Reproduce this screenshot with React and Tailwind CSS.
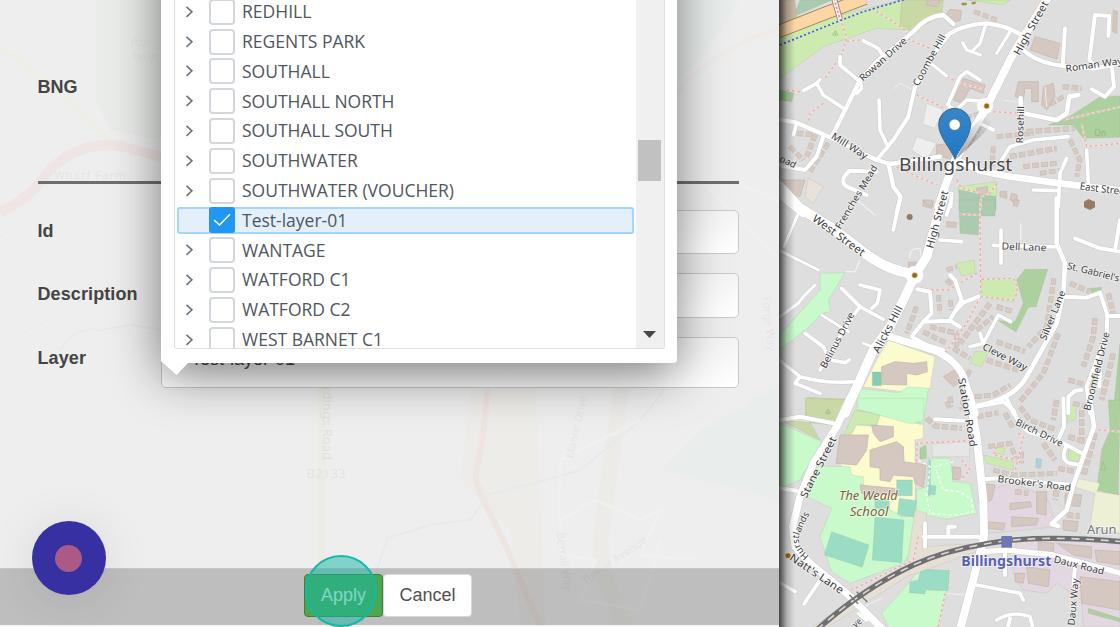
import React from "react";

const ROWS = [
  "REDHILL",
  "REGENTS PARK",
  "SOUTHALL",
  "SOUTHALL NORTH",
  "SOUTHALL SOUTH",
  "SOUTHWATER",
  "SOUTHWATER (VOUCHER)",
  "Test-layer-01",
  "WANTAGE",
  "WATFORD C1",
  "WATFORD C2",
  "WEST BARNET C1",
];

// The map is drawn as three vertical sections, each 600 units tall.
// Areas: [fill, path]
const AREAS = [
  [
    ["#cdebb0", "M-5,105 L160,50 L380,-5 L480,-5 L400,90 L290,85 L130,140 L0,235Z"],
    ["#c8d9a6", "M365,0 L490,0 L485,45 L400,95 L360,75Z"],
    ["#aacbaf", "M60,0 L155,0 L40,50Z"],
    ["#cbb9a4", "M0,0 L45,0 L50,50 L0,75Z"],
    ["#cdebb0", "M560,0 L690,0 L670,15 L600,5Z"],
    ["#a9d1a0", "M0,270 L42,280 L35,305 L0,300Z"],
    ["#add19e", "M1020,288 L960,290 L868,350 L805,375 L880,375 L910,415 L1020,412Z"],
    ["#cdebb0", "M535,560 L650,545 L650,590 L535,580Z"],
    ["#aacbaf", "M537,570 L648,590 L648,630 L537,630Z"],
    ["#eeeeee", "M440,310 L490,330 L465,385 L428,372Z M410,410 L470,430 L440,480 L395,450Z"],
    ["#e8e2da", "M85,535 L130,560 L100,610 L75,590Z"],
  ],
  [
    ["#aacbaf", "M537,0 L648,0 L645,48 L597,48 L595,105 L540,100Z"],
    ["#c8facc", "M120,220 L195,218 L145,300 L152,335 L125,340 L100,370 L0,450 L0,405 L120,270Z"],
    ["#cdebb0", "M530,190 L583,180 L585,220 L545,228Z"],
    ["#add19e", "M735,208 L803,208 L768,320 L745,322 L708,396 L655,362 L705,365 L730,310 L710,240Z"],
    ["#cdebb0", "M605,235 L700,235 Q722,270 700,305 L605,292Z"],
    ["#fbfbcd", "M325,420 L465,470 L450,565 L370,575 L250,560 L290,480Z"],
    ["#88cbb5", "M277,516 L304,516 L304,557 L277,557Z"],
    ["#c8facc", "M235,565 L355,578 L385,560 L445,565 L430,670 L350,655 L230,630Z"],
    ["#c8d9a6", "M82,592 L195,597 L170,650 L75,650Z"],
    ["#cdebb0", "M585,455 L625,455 L605,500 L570,490Z"],
    ["#add19e", "M1020,430 L1020,630 L1000,630Z M930,265 L965,262 L960,280 L935,278Z M400,420 L425,430 L405,435Z"],
    ["#cdebb0", "M935,525 L960,530 L950,565 L932,560Z"],
  ],
  [
    ["#c8d9a6", "M75,-5 L195,0 L160,75 L0,60 L120,120 L80,50Z"],
    ["#c8facc", "M0,70 L125,125 L60,240 L0,265Z"],
    ["#cdebb0", "M225,30 L300,45 L300,75 L235,75 L180,130Z"],
    ["#fbfbcd", "M300,45 L430,75 L430,115 L405,120 L405,345 L320,345 L270,270 L190,205 L170,180 L230,75 L290,80Z"],
    ["#c8facc", "M230,-5 L432,-5 L430,60 L395,72 L235,28Z"],
    ["#c8facc", "M110,198 L210,200 L215,225 L250,230 L250,280 L365,350 L405,350 L405,440 L370,490 L210,550 L155,515 L120,410 L155,325 L80,290Z"],
    ["#9bdcc5", "M350,240 L397,240 L397,287 L350,287Z M358,295 L411,302 L400,350 L352,342Z M285,352 L372,360 L365,488 L277,480Z M155,395 L267,435 L247,502 L133,465Z M285,300 L328,300 L328,325 L285,325Z"],
    ["#c8facc", "M445,175 L510,175 L520,245 L570,250 L590,340 L500,358 L410,340 L410,270 L440,260Z"],
    ["#9bdcc5", "M448,255 L468,258 L465,285 L447,282Z"],
    ["#e6e6e6", "M455,132 L568,125 L568,170 L458,170Z"],
    ["#add19e", "M420,145 L438,135 L440,175 L420,178Z"],
    ["#e3d8e1", "M615,270 L700,250 L800,290 L830,380 L730,390 L625,400Z M710,420 L1020,425 L1020,681 L910,681 L905,600 L830,550 L800,580 L730,570 L700,520Z"],
    ["#c8facc", "M385,550 L420,508 L508,512 L498,590 L470,690 L330,690 L305,640Z"],
    ["#9bdcc5", "M422,508 L508,512 L504,572 L438,570 L434,582 L388,578 L390,545 L415,540Z"],
    ["#add19e", "M985,0 L1020,0 L1015,285 L950,270 L965,150 L990,90Z M925,625 L1020,655 L1020,665 L925,640Z"],
    ["#eef0d5", "M890,235 L960,250 L950,275 L1020,285 L1020,400 L930,380 L945,280 L880,260Z"],
    ["#cdebb0", "M610,165 L700,185 L700,210 L620,190Z M865,150 L905,150 L895,185 L865,180Z M650,140 L675,145 L670,165 L645,160Z M865,15 L890,15 L885,60 L862,65Z"],
    ["#aad3df", "M768,175 L785,178 L782,205 L768,203Z M447,180 L452,180 L450,290 L443,285Z"],
    ["#e6dfd6", "M405,330 L440,340 L430,440 L600,430 L600,450 L380,530 L130,690 L100,681 L240,580 L380,500Z"],
  ],
];

const BUILDINGS = [
  "M510,28 L545,32 L540,62 L515,65 L500,40Z M765,110 L840,130 L830,178 L750,150Z M550,235 L615,255 L610,280 L570,265 L545,310 L520,300Z M715,245 L775,245 L775,305 L755,305 L755,265 L735,265 L730,300 L705,290Z M470,435 L520,430 L560,450 L520,480 L470,465Z M590,565 L622,560 L622,585 L590,585Z M440,0 L480,0 L470,20 L440,15Z M430,600 L460,603 L455,625 L428,618Z M1000,30 L1012,35 L1010,100 L998,95Z M790,260 L820,250 L825,290 L800,330 L785,315Z M0,540 L75,540 L60,590 L5,570Z M660,575 L680,575 L680,595 L660,590Z M695,580 L712,585 L710,610 L690,600Z",
  "M305,500 L345,485 L400,490 L440,485 L442,515 L410,525 L380,520 L380,555 L305,553 L305,525Z M385,187 L412,187 L408,205 L385,205Z M430,0 L455,0 L460,20 L440,15Z M500,65 L530,68 L528,82 L500,80Z M700,0 L718,0 L712,20 L700,16Z M490,530 L540,500 L560,530 L520,560Z",
  "M275,75 L340,80 L340,110 L300,125 L280,100Z M180,105 L265,105 L260,150 L230,195 L168,190Z M270,150 L350,125 L370,140 L372,185 L438,195 L430,262 L405,250 L400,230 L340,225 L330,245 L300,240 L300,205 L270,200Z M240,255 L345,265 L345,285 L245,280Z M518,200 L542,203 L542,240 L518,238Z M770,275 L800,275 L798,345 L770,340Z M695,350 L775,355 L770,375 L695,380Z M690,310 L750,305 L755,320 L690,330Z M775,425 L822,430 L820,458 L775,455Z M740,500 L810,510 L805,560 L745,550Z M900,530 L1020,545 L1020,630 L905,610Z M625,365 L675,370 L670,390 L625,385Z M600,250 L645,255 L635,300 L610,310Z M855,280 L905,285 L900,320 L855,315Z M705,520 L735,520 L730,550 L705,545Z M830,430 L935,440 L935,475 L880,465Z M945,450 L1020,455 L1020,495 L950,485Z M850,360 L895,365 L890,395 L850,390Z",
];

// Terraces: rows of small houses, [width, path]
const TERRACES = [
  [
    [12, "M582,35 L650,60"], [14, "M848,260 L905,265"], [12, "M650,410 L760,400"], [14, "M740,395 L885,385"],
    [14, "M690,470 L830,445"], [13, "M730,500 L830,490"], [12, "M640,440 L635,500"], [14, "M50,400 L105,405 L80,470"],
    [12, "M145,430 L90,515"], [12, "M30,440 L70,480"], [12, "M870,420 L900,480 L890,530"], [11, "M850,290 L800,320"],
    [12, "M780,520 L850,510"], [11, "M600,380 L560,440"], [10, "M530,360 L600,340"], [11, "M575,400 L600,385"],
  ],
  [
    [13, "M822,235 L800,380 L745,440"], [14, "M870,250 L930,275 M985,280 L1000,340"], [13, "M450,380 L530,400 L530,440"],
    [13, "M410,320 L380,400"], [13, "M430,395 L500,430"], [14, "M630,310 L540,430"], [14, "M650,320 L700,335"],
    [13, "M650,425 L735,455"], [14, "M620,480 L715,510"], [13, "M835,400 L790,520 L720,605"], [14, "M945,355 L940,410 L910,500"],
    [14, "M1000,460 L965,600"], [12, "M585,590 L640,585 L690,555"], [12, "M500,210 L530,200 M500,240 L520,260 M475,285 L480,340 M510,300 L515,330"],
    [13, "M865,540 L940,560"], [12, "M880,610 L920,620"], [12, "M570,510 L560,530 M510,590 L515,620"], [13, "M520,445 L570,475"], [12, "M590,390 L640,350"],
  ],
  [
    [14, "M440,55 L465,78 L545,85"], [13, "M590,50 L655,38 M675,40 L700,85"], [13, "M720,20 L750,60 L830,90"],
    [14, "M830,0 L820,60 M790,130 L825,180"], [14, "M905,30 L905,130"], [15, "M945,100 L910,230"], [12, "M625,140 L690,130 L710,180"],
    [12, "M640,210 L700,225 L830,220"], [12, "M725,155 L725,190"], [14, "M835,205 L890,215"], [14, "M865,110 L915,125"],
    [12, "M500,5 L510,30 M550,-5 L545,30"], [14, "M705,275 L745,280"], [16, "M830,270 L825,300"], [16, "M860,345 L900,348"],
  ],
];

const PATHS = [
  "M180,55 L200,115 L185,165 L135,235 M200,125 L250,118 M275,25 L370,85 L390,120 L450,145 M60,275 L20,270 M130,310 L90,340 L85,365 M410,285 L495,325 M500,230 L540,250 L620,270 M640,335 L720,340 M850,360 L1020,320 M905,370 L920,440 L1020,430 M335,495 L470,555 M530,540 L545,565 L600,580 M650,550 L630,580 L603,590 L603,630",
  "M600,0 L602,290 M540,43 L600,45 M605,238 L700,235 Q722,270 700,300 L605,290 M602,290 L560,370 L495,460 M405,270 L505,270 L590,220",
  "M410,185 L412,130 L570,122 M415,410 L400,480 L215,570 M495,580 L475,681 M955,90 L1020,95 M715,100 L730,110 L705,215 M650,140 L640,165 L710,180 M545,180 L570,210 L540,240",
];

// Roads: [width, path]
const ROADS = [
  [
    [24, "M812,-20 L700,160 L615,330 L525,480 L495,560 L475,620"],
    [20, "M530,480 L600,512 L690,530 L840,550 L1025,572"],
    [24, "M-10,575 L70,640"],
    [13, "M155,410 L215,290 L240,240 L290,185 L400,95 Q440,48 490,45 L520,72"],
    [13, "M500,108 Q540,75 620,70 Q690,78 730,110"],
    [13, "M730,150 Q770,188 850,198 L940,206 L1025,190"],
    [12, "M510,100 L470,150 L405,260 L385,350 L340,420 L290,480"],
    [10, "M617,75 L600,130 L575,155 M548,128 L560,150 L602,165 M690,95 L650,160"],
    [12, "M855,85 L848,195 M985,108 L988,48 L945,45 L928,180 L945,198 M995,195 L1002,260 L975,290 L935,268"],
    [11, "M297,300 L300,390 L320,432 M250,122 L295,145 L310,170 M180,170 L180,195 L240,245 L245,265 L230,280"],
    [11, "M70,272 L110,250 L130,285 L190,325 M110,250 L120,238 M50,370 L40,405"],
    [13, "M-5,358 L50,368 L150,412 L290,480 L330,492 L480,470"],
    [12, "M130,410 L110,470 L75,510 L-5,495"],
    [12, "M290,515 L210,512 Q175,540 200,560 L260,585"],
    [13, "M325,490 L340,560 L362,590 L350,640"],
    [9, "M455,192 L500,228"],
    [11, "M530,335 L503,315 L540,230 L560,215 L600,240 M535,325 L560,300 L620,305 M640,390 L600,370"],
    [14, "M722,295 L722,338 L830,360 L860,340 L868,290 L895,285"],
    [11, "M665,480 L690,440 L760,420 L865,410 M920,450 L925,550 M860,475 L840,520 L835,620 M760,570 L835,572 M515,580 L512,620"],
  ],
  [
    [30, "M-10,-50 L60,25 L150,80 L230,140 Q310,210 400,222"],
    [28, "M495,-20 L470,60 L440,170 L405,225 L375,290 L330,380 L280,450 L240,540 L195,640"],
    [22, "M330,410 L460,450 Q530,480 550,530 L585,640"],
    [14, "M830,-5 L830,130 L855,190 L850,280 L830,370 L740,530 Q700,600 580,620"],
    [9, "M0,152 L115,210 M55,40 L12,140 M105,255 L70,290 L55,310 L0,350 M125,345 L205,395 M250,430 L290,445"],
    [11, "M185,265 L240,320 L310,358 M240,320 L210,360 L120,510 M240,255 L300,270 L292,310 L275,325"],
    [11, "M75,400 L130,440 L150,480 L195,488 L208,480 M0,482 L60,530 Q140,552 220,545 M60,530 L45,550 L120,580"],
    [11, "M360,-5 L340,90 M480,120 L545,125 M515,-5 L500,45"],
    [12, "M412,268 L450,275 L455,340 L430,365 L395,410 M430,365 L510,362 L540,380 M510,225 L525,240 L545,300 L510,360 M530,330 L550,308 L595,290 M395,410 L440,435 L490,450"],
    [11, "M570,440 L610,430 L655,345 L692,365 M610,430 L600,400 M663,90 L663,190 M640,136 L835,141"],
    [12, "M885,115 L960,145 L1025,155 M1020,60 L1005,150 M855,290 L920,293 L960,278 L982,345 L980,400 L950,480 L920,560 L930,640 M980,347 L1025,348 M865,640 L865,590 L885,572 L905,570 M960,515 L958,560 M680,595 L700,640"],
  ],
  [
    [22, "M212,-10 L170,80 L100,190 L60,290 L38,380 L45,440 L90,490 L200,580 L310,690"],
    [24, "M568,-15 L590,110 L610,300 L612,410 L590,500 L540,690"],
    [12, "M0,60 L60,50 L160,70 M465,58 L550,62 M0,265 L50,272"],
    [12, "M580,22 L670,5 L700,30 Q720,90 760,100 L850,130 L905,160 M850,-5 L852,80 L830,130"],
    [14, "M930,0 L942,80 L910,170 L880,255 L860,330 L815,372 L835,378"],
    [12, "M610,238 L650,235 L880,255 M858,140 Q840,180 870,190 L900,195"],
    [12, "M435,370 L435,440 M430,410 L600,410 M505,410 L505,380 L525,380 M120,540 L72,612"],
    [11, "M590,555 L720,580 L730,600 M650,660 Q700,630 750,650 L760,690 M0,548 L45,575 M235,640 L260,660"],
    [16, "M610,455 L680,450 L820,465 L1025,520"],
    [12, "M885,500 L880,560 M675,460 L675,525 M690,655 L680,700"],
  ],
];

// Labels: [text, x, y, angle, size, textLength] with the anchor in the middle
const LABELS = [
  ["Rowan Drive", 309, 178, -42, 29, 180],
  ["Coombe Hill", 448, 180, -61, 29, 172],
  ["High Street", 753, 84, -61, 31, 180],
  ["Roman Way", 942, 194, -8, 29, 172],
  ["Rosehill", 721, 374, -88, 28, 112],
  ["Mill Way", 209, 438, 32, 30, 122],
  ["oad", 24, 485, 25, 28, 52],
  ["East Street", 972, 567, 7, 31, 146],
  ["Frenches Mead", 229, 591, -59, 28, 218],
  ["High Street", 472, 658, -75, 31, 178],
  ["West Street", 176, 706, 36, 33, 186],
  ["Dell Lane", 732, 741, 2, 30, 134],
  ["St. Gabriel's", 940, 816, 14, 29, 160],
  ["Belinus Drive", 172, 1021, -62, 29, 185],
  ["Alicks Hill", 323, 988, -62, 32, 156],
  ["Silver Lane", 818, 946, -68, 29, 158],
  ["Cleve Way", 675, 1071, 27, 29, 146],
  ["Broomfield Drive", 950, 1114, -76, 29, 242],
  ["Station Road", 562, 1237, 80, 30, 210],
  ["Birch Drive", 778, 1298, 26, 29, 154],
  ["Stane Street", 115, 1402, -63, 31, 202],
  ["Brooker's Road", 763, 1450, 7, 29, 222],
  ["Natt's Lane", 110, 1721, 34, 32, 187],
  ["Daux Road", 897, 1696, 14, 29, 155],
  ["Daux Way", 880, 1806, -85, 29, 142],
  ["ve", 231, 1868, -40, 28, 26],
];

function Section({ index, children }) {
  return <g transform={`translate(0 ${index * 600})`}>{children}</g>;
}

function StreetMap() {
  return (
    <svg className="block h-full w-full" viewBox="-3 0 1023 1881" preserveAspectRatio="none">
      <rect x="-3" width="1023" height="1881" fill="#dedede" />
      {AREAS.map((list, i) => (
        <Section key={i} index={i}>
          {list.map(([fill, d], k) => (
            <path key={k} d={d} fill={fill} stroke="#8a9a7a" strokeOpacity="0.25" strokeWidth="2" />
          ))}
        </Section>
      ))}
      {TERRACES.map((list, i) => (
        <Section key={i} index={i}>
          {list.map(([w, d], k) => (
            <g key={k} fill="none">
              <path d={d} stroke="#c6b8af" strokeWidth={w + 2} strokeDasharray="20 7" />
              <path d={d} stroke="#d6cac3" strokeWidth={w - 1} strokeDasharray="18 9" strokeDashoffset="-1" />
            </g>
          ))}
        </Section>
      ))}
      {BUILDINGS.map((d, i) => (
        <Section key={i} index={i}>
          <path d={d} fill="#d5c8c0" stroke="#c3b4aa" strokeWidth="2" />
        </Section>
      ))}
      {PATHS.map((d, i) => (
        <Section key={i} index={i}>
          <path d={d} fill="none" stroke="#f1e6e3" strokeOpacity="0.7" strokeWidth="6" />
          <path d={d} fill="none" stroke="#f2a9a1" strokeWidth="4" strokeDasharray="8 8" />
        </Section>
      ))}
      <g fill="none">
        <path d="M340,268 L360,250 L400,270 M795,260 L800,320 M670,300 L720,308" stroke="#efefef" strokeWidth="3" />
        <path d="M240,780 L225,815 L195,815 M390,775 Q385,745 420,745 L425,780 M722,670 L722,720 M240,850 L280,870 M230,600 L285,645" stroke="#f1f1f1" strokeWidth="4" />
        <path d="M250,1820 L305,1795 M500,1780 L555,1785" stroke="#f1f1f1" strokeWidth="3" />
      </g>
      <path d="M415,1380 L450,1400 L440,1490 L450,1540 L530,1545 L578,1535 L575,1500 L540,1475 L490,1470 L465,1400 L520,1385" fill="none" stroke="#f7fff7" strokeWidth="4" strokeDasharray="10 7" />
      {ROADS.map((list, i) => (
        <Section key={i} index={i}>
          {list.map(([w, d], k) => (
            <path key={k} d={d} fill="none" stroke="#cacaca" strokeWidth={w + 3} strokeLinejoin="round" strokeLinecap="round" />
          ))}
        </Section>
      ))}
      {ROADS.map((list, i) => (
        <Section key={i} index={i}>
          {list.map(([w, d], k) => (
            <path key={k} d={d} fill="none" stroke="#ffffff" strokeWidth={w} strokeLinejoin="round" strokeLinecap="round" />
          ))}
        </Section>
      ))}
      <circle cx="615" cy="318" r="24" fill="#fff" />
      <circle cx="403" cy="825" r="27" fill="#fff" />

      {/* A-road with the footbridge */}
      <path d="M-5,95 L130,42 L255,-5" fill="none" stroke="#9c7c4c" strokeWidth="40" />
      <path d="M-5,95 L130,42 L255,-5" fill="none" stroke="#fcd6a4" strokeWidth="35" />
      <path d="M0,135 L180,62 L250,35 L385,-5" fill="none" stroke="#4a55e0" strokeWidth="5" strokeDasharray="6 7" />
      <path d="M162,-5 L180,58" stroke="#8c7f76" strokeWidth="17" />
      <path d="M162,-5 L180,58" stroke="#f6efeb" strokeWidth="12" />
      <path d="M162,-5 L180,58" stroke="#e09a90" strokeWidth="5" strokeDasharray="7 6" />

      {/* Railway */}
      <path d="M110,1890 Q250,1765 400,1695 Q500,1650 610,1633 Q760,1602 1025,1625" fill="none" stroke="#707070" strokeWidth="16" />
      <path d="M110,1890 Q250,1765 400,1695 Q500,1650 610,1633 Q760,1602 1025,1625" fill="none" stroke="#d8d8d8" strokeWidth="5" strokeDasharray="24 20" />
      <path d="M208,1784 L235,1812 M230,1775 L262,1806" stroke="#777" strokeWidth="4" />
      <rect x="664" y="1608" width="32" height="35" fill="#6e76b4" />

      <g fill="#9b6a12" stroke="#fff" strokeWidth="2">
        <circle cx="620" cy="318" r="9" />
        <circle cx="404" cy="826" r="9" />
        <circle cx="24" cy="1667" r="9" />
      </g>
      <circle cx="389" cy="651" r="9" fill="#967b60" />
      <path d="M912,605 L925,597 L945,605 L945,622 L930,630 L912,622Z" fill="#967b60" />
      <path d="M545,12 L560,12 M575,10 L587,8" stroke="#a09238" strokeWidth="7" />
      <path d="M166,92 V108 M158,105 H174 L166,92Z M144,1228 V1245 M136,1240 H152 L144,1228Z M970,1385 L978,1410 H963Z" stroke="#a3b585" strokeWidth="2" fill="none" />

      <g fontFamily="'Noto Sans', 'Open Sans', sans-serif" textAnchor="middle" stroke="#ffffff" strokeOpacity="0.65" strokeWidth="5" strokeLinejoin="round" style={{ paintOrder: "stroke" }}>
        {LABELS.map(([text, x, y, angle, size, len], k) => (
          <text key={k} transform={`translate(${x} ${y}) rotate(${angle})`} y={size * 0.34} fontSize={size} textLength={len} lengthAdjust="spacingAndGlyphs" fill="#3c3c3c">
            {text}
          </text>
        ))}
        <path id="hurst" d="M100,1678 Q38,1635 65,1590 Q78,1555 98,1530" fill="none" stroke="none" />
        <text fontSize="28" fill="#3c3c3c">
          <textPath href="#hurst" startOffset="50%">Hurstlands</textPath>
        </text>
        <text x="965" y="1602" fontSize="36" fill="#757575" textLength="88" lengthAdjust="spacingAndGlyphs">Arun</text>
        <text x="960" y="407" fontSize="26" fill="#8db87e" stroke="none">On</text>
        <text x="265" y="1501" fontSize="37" fontStyle="italic" fill="#7c6134" textLength="176" lengthAdjust="spacingAndGlyphs">The Weald</text>
        <text x="267" y="1547" fontSize="37" fontStyle="italic" fill="#7c6134" textLength="116" lengthAdjust="spacingAndGlyphs">School</text>
        <text x="679" y="1697" fontSize="40" fontWeight="700" fill="#5a62b0" textLength="270" lengthAdjust="spacingAndGlyphs">Billingshurst</text>
        <text x="527" y="514" fontSize="56" fill="#484848" textLength="340" lengthAdjust="spacingAndGlyphs">Billingshurst</text>
      </g>

      {/* Location pin */}
      <defs>
        <linearGradient id="pin" x1="0" y1="0" x2="0" y2="1">
          <stop offset="0" stopColor="#3a86c4" />
          <stop offset="1" stopColor="#1f78c4" />
        </linearGradient>
        <linearGradient id="pinShadow" x1="0" y1="1" x2="1" y2="0">
          <stop offset="0" stopColor="#000" stopOpacity="0.4" />
          <stop offset="1" stopColor="#000" stopOpacity="0" />
        </linearGradient>
      </defs>
      <path d="M528,478 L575,385 Q610,340 630,355 Q640,375 600,410Z" fill="url(#pinShadow)" />
      <path d="M525,478 C515,448 476,412 476,373 A48,48 0 0 1 572,373 C572,412 535,448 525,478Z" fill="url(#pin)" stroke="#2b6a9f" strokeWidth="3" />
      <circle cx="524" cy="374" r="17" fill="#fff" stroke="#2b6a9f" strokeWidth="2" />
    </svg>
  );
}

function FaintMap() {
  return (
    <svg className="absolute inset-0 h-full w-full opacity-80" viewBox="0 0 778 627" fill="none">
      <path d="M95,0 L161,0 L161,140 L110,130 L95,100Z" fill="#e9ece9" />
      <path d="M677,0 L740,0 L700,60 L677,80Z M778,385 L700,430 L660,470 L778,500Z" fill="#e9edec" />
      <path d="M470,390 L535,385 L545,627 L520,627 L510,530 L460,480Z" fill="#edece8" />
      <path d="M0,48 Q40,72 65,100 L108,141" stroke="#efefe6" strokeWidth="6" />
      <path d="M0,212 Q30,198 45,175 Q75,140 120,146 L161,157" stroke="#eee3e2" strokeWidth="10" />
      <path d="M321,388 V627" stroke="#ecece2" strokeWidth="8" />
      <path d="M490,365 L483,430 L475,478 L480,494 L505,545 L540,627" stroke="#eee3de" strokeWidth="6" />
      <path d="M622,380 L600,540 Q600,580 625,627" stroke="#ecebe6" strokeWidth="16" />
      <path d="M677,93 Q705,55 778,28" stroke="#efebe8" strokeWidth="5" />
      <path d="M375,575 L387,538 L430,525 L470,520 L487,495 L545,480 L580,470 L640,420 L665,388 M60,350 Q75,325 100,330 L130,325 L161,330" stroke="#e4eaea" strokeWidth="2" />
      <path d="M0,235 L40,265 L55,285 M100,290 L20,335" stroke="#e9ebeb" strokeWidth="1.5" strokeDasharray="3 3" />
      <path d="M560,520 L560,555 L595,560 L580,600 L640,610 L660,540 M560,520 L595,500 L640,520 L660,510 L640,555 L700,560 M558,520 L560,460 L640,420 M740,185 L778,200 M700,180 Q740,220 778,260" stroke="#f1f1f1" strokeWidth="3" />
      <g fontFamily="'Noto Sans', sans-serif" fill="#e2e2e2" fontSize="11">
        <text x="54" y="179" textLength="71">Wharf Farm</text>
        <text x="130" y="46" fontStyle="italic">Pop</text>
        <text x="132" y="60" fontStyle="italic">Hosp</text>
        <text x="306" y="478" textLength="39" fill="#e2e1dc" fontSize="13">B2133</text>
        <text transform="translate(322 372) rotate(90)" textLength="88" fill="#dddddb" fontSize="13">Lordings Road</text>
        <text transform="translate(573 459) rotate(-78)">Manor Drive</text>
        <text transform="translate(556 533) rotate(82)">Berrall Way</text>
        <text transform="translate(585 585) rotate(-35)">Turner Avenue</text>
        <text transform="translate(762 297) rotate(84)">Forge Way</text>
      </g>
    </svg>
  );
}

function TreeRow({ label, selected }) {
  return (
    <li
      className={
        selected
          ? "flex h-[26.8px] shrink-0 items-center rounded-[3px] bg-[#e3f0fb] shadow-[inset_0_0_0_2px_#a6d5fa]"
          : "flex h-[26.8px] shrink-0 items-center"
      }
    >
      <span className="flex w-[32.5px] shrink-0 items-center">
        {!selected && (
          <svg className="ml-[8px] size-3" viewBox="0 0 12 12" fill="none" stroke="#6c757d" strokeWidth="1.6">
            <path d="M1.5 0.8 L6.9 5.8 L1.5 10.8" />
          </svg>
        )}
      </span>
      {selected ? (
        <span className="flex size-[26px] shrink-0 items-center justify-center rounded-[3px] bg-[#2196f3]">
          <svg className="h-4 w-[18px]" viewBox="0 0 18 16" fill="none" stroke="#fff" strokeWidth="1.6">
            <path d="M1 8 L6.5 13 L17 2.2" />
          </svg>
        </span>
      ) : (
        <span className="size-[26px] shrink-0 rounded-[4px] border-2 border-[#d3d6dc] bg-white" />
      )}
      <span className="ml-[7px] whitespace-nowrap font-['Open_Sans','Noto_Sans',sans-serif] text-[17.5px] leading-none text-[#4f565d]">
        {label}
      </span>
    </li>
  );
}

function Field({ label, className, labelClass, children }) {
  return (
    <div className={`flex ${className}`}>
      <label className={`w-[123.5px] shrink-0 text-[18px] font-bold leading-6 tracking-[0.1px] text-[#444] ${labelClass}`}>{label}</label>
      <div className="flex-1 rounded-[5px] border border-[#c9c9c9] bg-gradient-to-b from-[#f4f4f4] to-white pl-[29px] pt-[9px] text-[18px] leading-6 text-[#444]">
        {children}
      </div>
    </div>
  );
}

function LayerPopover() {
  return (
    <>
      <div className="absolute -top-20 left-[161px] h-[455px] w-[515px] bg-black/50 blur-[25px]" />
      <div className="absolute -top-5 left-[161px] h-[382.5px] w-[515.5px] rounded-[4px] bg-white pl-[13px] pr-3 pt-5">
        <div className="flex h-[349px] overflow-hidden rounded-b-[3px] border border-t-0 border-[#dee0e2]">
          <ul className="-mt-[1.5px] ml-[1.5px] flex w-[459px] flex-col gap-[3px] pr-[2px]">
            {ROWS.map((name) => (
              <TreeRow key={name} label={name} selected={name === "Test-layer-01"} />
            ))}
          </ul>
          <div className="flex flex-1 flex-col items-center justify-between bg-[#f0f0f0] pb-[10px] pr-[1px] pt-[140px]">
            <div className="h-[41px] w-[23px] bg-[#c1c1c1]" />
            <svg className="h-[7px] w-[13px]" viewBox="0 0 13 7">
              <path d="M0 0 H13 L6.5 7Z" fill="#484848" />
            </svg>
          </div>
        </div>
        <svg className="absolute left-0 top-[378px] h-[18px] w-[31px]" viewBox="0 0 31 18">
          <path d="M0 0 H31 V4 H28 L15.5 17 L1 4 L0 3Z" fill="#fff" />
        </svg>
      </div>
    </>
  );
}

export default function App() {
  return (
    <div className="flex h-[627px] w-[1120px] overflow-hidden bg-[#eee] font-['Liberation_Sans',Arial,sans-serif]">
      <section className="relative flex w-[779px] shrink-0 flex-col overflow-hidden bg-[#eeeeee]">
        <FaintMap />
        <div className="relative flex flex-1 flex-col pl-[37.5px] pr-10">
          <div className="h-[181px] shrink-0 pt-[75px] text-[18px] font-bold leading-6 text-[#444]">BNG</div>
          <div className="h-[3px] bg-[#6e6e6e]" />
          <Field label="Id" className="mt-[26px] h-11" labelClass="pt-[9px]" />
          <Field label="Description" className="mt-[19px] h-[45px]" labelClass="pt-[9px]" />
          <Field label="Layer" className="mt-[19px] h-[51px]" labelClass="pt-[9px]">
            Test-layer-01
          </Field>
        </div>
        <footer className="relative flex h-[57px] items-start bg-black/20 pl-[304px] pt-[6px] shadow-[inset_0_1px_0_#c8c8c8]">
          <button className="h-[43px] w-[79px] rounded-[4px] border border-[#3f8040] bg-[#4ea64e] text-[18px] text-[#e8f5e8]">Apply</button>
          <button className="h-[43px] w-[89px] rounded-[4px] border border-[#d8d8d8] bg-white text-[18px] text-[#505050]">Cancel</button>
        </footer>
        <div className="relative h-[2px] bg-[#f4f4f4]" />
        <LayerPopover />
        <div className="absolute left-[31.5px] top-[521px] flex size-[74px] items-center justify-center rounded-full bg-[#3730a3] shadow-[0_4px_50px_rgba(0,0,0,0.1)]">
          <div className="size-[27px] rounded-full bg-[#ab5a88]" />
        </div>
        <div className="absolute left-[305px] top-[555px] size-[72px] rounded-full border-[2.5px] border-[#14b8a6] bg-[#14b8a6]/50" />
      </section>
      <section className="relative min-w-0 flex-1 overflow-hidden">
        <StreetMap />
        <div className="absolute inset-y-0 left-0 w-4 bg-gradient-to-r from-black/70 via-black/20 to-transparent" />
      </section>
    </div>
  );
}
